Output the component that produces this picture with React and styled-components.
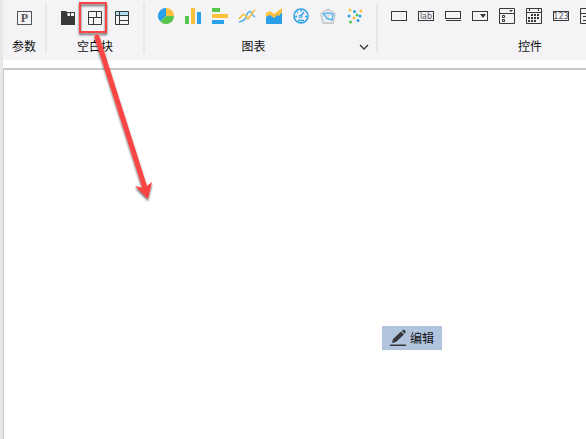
import React from "react";
import styled, { createGlobalStyle } from "styled-components";

const INK = "#383838";
const BLUE = "#2b9fe8";
const YELLOW = "#fbc03c";
const GREEN = "#55c64b";

const GlobalStyle = createGlobalStyle`
  * { box-sizing: border-box; }
  body {
    margin: 0;
    background: #e8e8e8;
    font-family: "Liberation Sans", "Noto Sans CJK SC", sans-serif;
    font-size: 12px;
    color: #111;
  }
`;

const Page = styled.div`
  position: relative;
  display: flex;
  flex-direction: column;
  min-height: 100vh;
  padding-left: 3px;
  overflow: hidden;
`;

const Ribbon = styled.header`
  display: flex;
  height: 60px;
  padding: 3px 0 7px;
  background: #f4f4f7;
  overflow: hidden;
`;

const Group = styled.section`
  display: flex;
  flex: 0 0 ${(p) => p.$width}px;
  flex-direction: column;
  justify-content: space-between;
  border-right: 2px solid #e8e8e6;
`;

const Tools = styled.div`
  display: flex;
  justify-content: ${(p) => (p.$start ? "flex-start" : "center")};
  padding: ${(p) => (p.$low ? "3px 0 0" : "1px 0 0")};
  padding-left: ${(p) => (p.$start ? "7px" : "0")};
`;

const ToolButton = styled.button`
  display: flex;
  flex: none;
  align-items: center;
  justify-content: center;
  width: 27px;
  height: 24px;
  padding: 0;
  border: 0;
  background: transparent;
`;

const LabelRow = styled.div`
  display: grid;
  grid-template-columns: 1fr ${(p) => (p.$more ? "16px" : "0")};
  padding: ${(p) => (p.$more ? "0 4px 0 6px" : "0")};
  height: 12px;
  align-items: center;
  text-align: center;
  line-height: 12px;
`;

const MoreButton = styled.button`
  display: flex;
  align-items: center;
  justify-content: center;
  height: 12px;
  padding: 0;
  border: 0;
  background: transparent;
`;

const Workspace = styled.main`
  display: flex;
  flex: 1;
  padding-top: 8px;
  background: #fff;
`;

const Canvas = styled.div`
  position: relative;
  flex: 1;
  border-top: 2px solid #c8c8c8;
  border-left: 1px solid #c8c8c8;
  background: #fff;
`;

const EditButton = styled.button`
  position: absolute;
  left: 378px;
  top: 256px;
  display: flex;
  align-items: center;
  gap: 3px;
  height: 24px;
  padding: 0 8px 0 7px;
  border: 0;
  background: #b0c4de;
  color: #111;
  font: inherit;
`;

const EditText = styled.span`
  padding-top: 2px;
  line-height: 16px;
`;

const Annotation = styled.svg`
  position: absolute;
  left: 72px;
  top: 0;
  pointer-events: none;
`;

const Glyph = ({ children }) => (
  <svg width="18" height="18" viewBox="0 0 18 18" fill="none" stroke={INK} aria-hidden="true">
    {children}
  </svg>
);

const ParameterIcon = () => (
  <Glyph>
    <rect x="2.5" y="2.5" width="14" height="13" stroke="#555" />
    <text x="9.5" y="13" fill="#555" stroke="none" fontSize="12" fontWeight="bold" textAnchor="middle" fontFamily="Liberation Serif">P</text>
  </Glyph>
);

const TabBlockIcon = () => (
  <Glyph>
    <path d="M2 2H7L8 3H16V16H2Z" fill={INK} stroke="none" />
    <path d="M8.5 4H11V7H8.5ZM12 4H15V7H12Z" fill="#f4f4f7" stroke="none" />
  </Glyph>
);

const ReportBlockIcon = () => (
  <Glyph>
    <path d="M2.5 2.5H15.5V15.5H2.5ZM2.5 8.5H15.5M10.5 2.5V8.5M7.5 8.5V15.5" />
  </Glyph>
);

const TableBlockIcon = () => (
  <Glyph>
    <path d="M3 3H15V6H3Z" fill="#aee0f5" stroke="none" />
    <path d="M2.5 2.5H15.5V15.5H2.5ZM2.5 6.5H15.5M6.5 2.5V15.5M6.5 11.5H15.5" />
  </Glyph>
);

const PieIcon = () => (
  <Glyph>
    <g stroke="none">
      <path d="M9 9V1A8 8 0 0 0 3.2 14.5Z" fill={BLUE} />
      <path d="M9 9V1A8 8 0 0 1 17 9Z" fill={YELLOW} />
      <path d="M9 9H17A8 8 0 0 1 3.2 14.5Z" fill={GREEN} />
    </g>
  </Glyph>
);

const ColumnIcon = () => (
  <Glyph>
    <g stroke="none">
      <path d="M1 9H5V17H1Z" fill={GREEN} />
      <path d="M7 1H11V17H7Z" fill={YELLOW} />
      <path d="M13 5H17V17H13Z" fill={BLUE} />
    </g>
  </Glyph>
);

const BarIcon = () => (
  <Glyph>
    <g stroke="none">
      <path d="M1 1H9V5H1Z" fill={GREEN} />
      <path d="M1 7H17V11H1Z" fill={YELLOW} />
      <path d="M1 13H13V17H1Z" fill={BLUE} />
    </g>
  </Glyph>
);

const LineIcon = () => (
  <Glyph>
    <path d="M1 15C4 14.5 7 13 8 10S10 4 12 4.500S14 9 17 10" stroke="#4caef0" strokeWidth="1.6" />
    <path d="M1 12L5 7.5L7 8L10 12L13 8L17 2.5" stroke={YELLOW} strokeWidth="1.6" />
  </Glyph>
);

const AreaIcon = () => (
  <Glyph>
    <g stroke="none">
      <path d="M1 6L5 4L9 7L17 1V17H1Z" fill={YELLOW} />
      <path d="M1 10L5 8L9 11L12 8L14 9L17 5V17H1Z" fill={BLUE} />
    </g>
  </Glyph>
);

const GaugeIcon = () => (
  <Glyph>
    <circle cx="9" cy="9" r="7" stroke={BLUE} strokeWidth="1.5" />
    <path d="M9 3V5M5 5L6 6M3 9.5H5M13 9.5H15M12 5L8.5 9.5M6 13.5H12" stroke={BLUE} strokeWidth="1.3" />
    <circle cx="8.5" cy="9.5" r="1.5" stroke={BLUE} />
  </Glyph>
);

const RadarIcon = () => (
  <Glyph>
    <path d="M9 2L16 7L14 16H4L2 7Z" stroke="#cbcdd0" strokeWidth="1.8" />
    <path d="M9 2V9L16 7M9 9L14 16M9 9L4 16M9 9L2 7" stroke="#d8dadc" />
    <path d="M4.5 7L9 6L14 7L13 13L8 11.5Z" stroke="#55b9f0" strokeWidth="1.5" />
  </Glyph>
);

const scatterDots = [
  [4, 3, YELLOW], [8.5, 4.5, BLUE], [15, 4, YELLOW],
  [3, 9, BLUE], [11, 8, GREEN], [14, 9, BLUE],
  [8, 11, YELLOW], [4.5, 15, GREEN], [12, 13.5, BLUE],
];

const ScatterIcon = () => (
  <Glyph>
    {scatterDots.map(([x, y, fill]) => (
      <circle key={`${x}-${y}`} cx={x} cy={y} r="1.5" fill={fill} stroke="none" />
    ))}
  </Glyph>
);

const TextBoxIcon = () => (
  <Glyph><rect x="1.5" y="4.5" width="15" height="9" /></Glyph>
);

const LabelIcon = () => (
  <Glyph>
    <rect x="1.5" y="4.5" width="15" height="9" />
    <text x="9" y="12" fill="#555" stroke="none" fontSize="8" textAnchor="middle" fontFamily="DejaVu Sans">lab</text>
  </Glyph>
);

const ButtonIcon = () => (
  <Glyph>
    <rect x="1.5" y="4.5" width="15" height="7" />
    <path d="M2 13.5H17" />
  </Glyph>
);

const ComboIcon = () => (
  <Glyph>
    <rect x="1.5" y="4.5" width="15" height="9" />
    <path d="M9 7H15L12 11Z" fill={INK} stroke="none" />
  </Glyph>
);

const DropListIcon = () => (
  <Glyph>
    <path d="M1.5 1.5H16.5V16.5H1.5ZM1.5 6.5H16.5" />
    <path d="M11 3H15L13 5Z" fill={INK} stroke="none" />
    <path d="M4.5 8.5H6.5V10.5H4.5ZM4.5 12.5H6.5V14.5H4.5Z" />
  </Glyph>
);

const CalendarIcon = () => (
  <Glyph>
    <path d="M1.5 1.5H16.5V16.5H1.5ZM1.5 5.5H16.5M4.5 1V4M13.5 1V4" />
    <path d="M6 8H14M3 11H14M3 14H11" strokeWidth="2" strokeDasharray="2 1" />
  </Glyph>
);

const NumberIcon = () => (
  <Glyph>
    <rect x="1.5" y="4.5" width="15" height="9" />
    <text x="9" y="12" fill="#555" stroke="none" fontSize="8" textAnchor="middle" fontFamily="DejaVu Sans">123</text>
  </Glyph>
);

const ListIcon = () => (
  <Glyph>
    <path d="M1.5 1.5H16.5V16.5H1.5ZM1.5 6.5H16.5M4 9.5H14M4 13.5H14" />
  </Glyph>
);

const groups = [
  { label: "参数", width: 44, low: true, tools: [["参数", ParameterIcon]] },
  {
    label: "空白块", width: 98, low: true,
    tools: [["标签块", TabBlockIcon], ["报表块", ReportBlockIcon], ["表格块", TableBlockIcon]],
  },
  {
    label: "图表", width: 233, more: true,
    tools: [
      ["饼图", PieIcon], ["柱形图", ColumnIcon], ["条形图", BarIcon], ["折线图", LineIcon],
      ["面积图", AreaIcon], ["仪表盘", GaugeIcon], ["雷达图", RadarIcon], ["散点图", ScatterIcon],
    ],
  },
  {
    label: "控件", width: 306, start: true,
    tools: [
      ["文本框", TextBoxIcon], ["标签", LabelIcon], ["按钮", ButtonIcon], ["下拉框", ComboIcon],
      ["下拉复选框", DropListIcon], ["日期", CalendarIcon], ["数字", NumberIcon], ["列表", ListIcon],
    ],
  },
];

const PencilIcon = () => (
  <svg width="18" height="18" viewBox="0 0 18 18" fill={INK} aria-hidden="true">
    <path d="M3 14L4 10L12 2.5L15 5.5L7 13ZM12.8 1.8L14 1Q15 .5 16 1.5T16.5 3.5L15.7 4.7Z" />
    <path d="M1 15.5H17V17H1Z" />
  </svg>
);

export default function App() {
  return (
    <Page>
      <GlobalStyle />
      <Ribbon>
        {groups.map(({ label, width, low, more, start, tools }) => (
          <Group key={label} $width={width} aria-label={label}>
            <Tools $low={low} $start={start}>
              {tools.map(([name, Icon]) => (
                <ToolButton key={name} type="button" aria-label={name}><Icon /></ToolButton>
              ))}
            </Tools>
            <LabelRow $more={more}>
              <span>{label}</span>
              {more && (
                <MoreButton type="button" aria-label="更多图表">
                  <svg width="10" height="6" viewBox="0 0 10 6" fill="none" stroke={INK} strokeWidth="1.3">
                    <path d="M1 1L5 5L9 1" />
                  </svg>
                </MoreButton>
              )}
            </LabelRow>
          </Group>
        ))}
      </Ribbon>
      <Workspace>
        <Canvas>
          <EditButton type="button"><PencilIcon /><EditText>编辑</EditText></EditButton>
        </Canvas>
      </Workspace>
      <Annotation width="96" height="210" viewBox="72 0 96 210" fill="none" aria-hidden="true">
        <defs>
          <filter id="shadow" x="-30%" y="-30%" width="160%" height="160%">
            <feDropShadow dx="0" dy="2" stdDeviation="1" floodColor="#000" floodOpacity="0.6" />
          </filter>
        </defs>
        <g filter="url(#shadow)">
          <rect x="80" y="3" width="26" height="29" stroke="#fa4444" strokeWidth="2" />
          <path d="M97 37L145 188" stroke="#fa4444" strokeWidth="5" strokeLinecap="round" />
          <path d="M148 199L135 186L144 188L152 182Z" fill="#fa4444" />
        </g>
      </Annotation>
    </Page>
  );
}
